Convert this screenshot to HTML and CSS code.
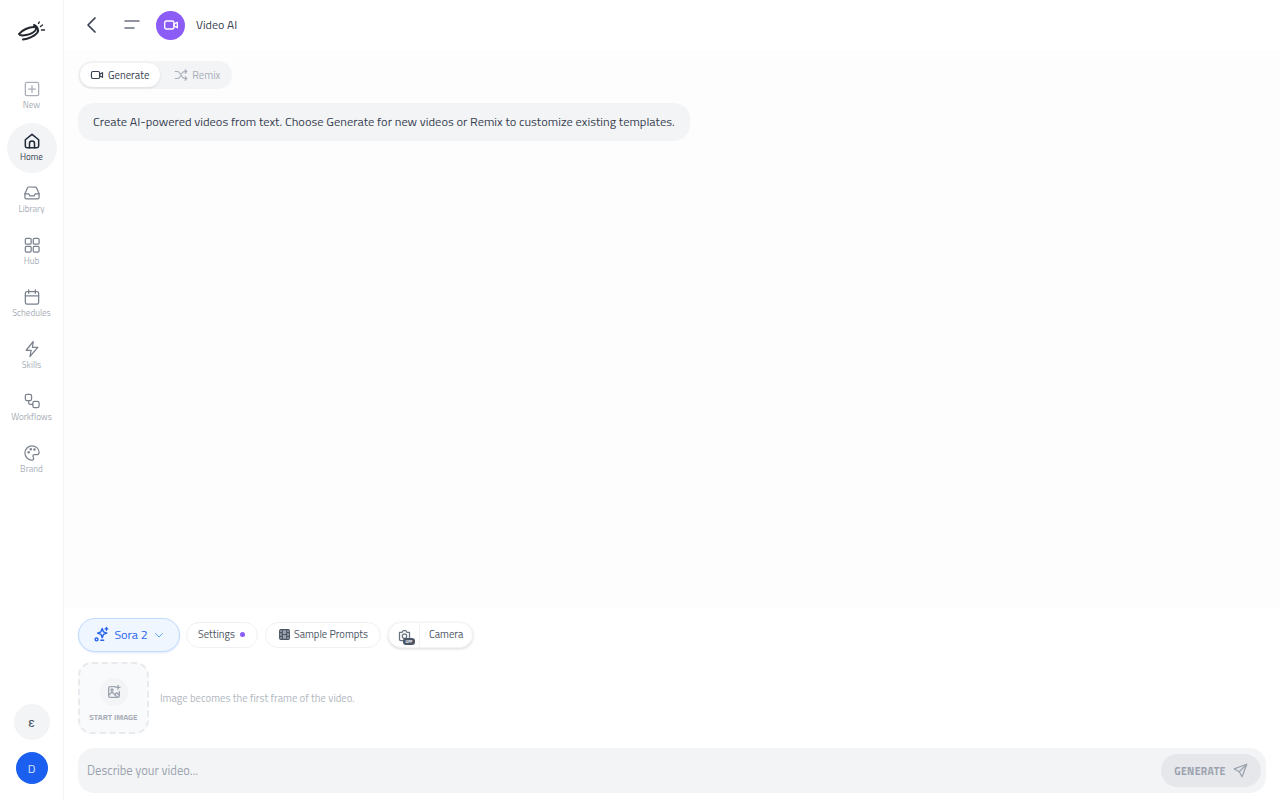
FILE: index.html
```html
<!DOCTYPE html>
<html lang="en">
<head>
<meta charset="utf-8">
<title>Video AI</title>
<link rel="stylesheet" href="styles.css">
</head>
<body>
<div class="app">
  <aside class="sidebar">
    <div class="logo">
      <svg width="28" height="22" viewBox="0 0 28 22"><path d="M1 13C4 9 11 6 16 6c3 0 3 3-1 5.500-4 2.500-10 3.500-13 2.500" stroke-width="2"/><path d="M5 18.500c5-.5 12-3.500 14.500-7 1.500-2.500 0-6-3.500-7.500" stroke-width="2"/><path d="M22.500 5.500l2-1.500M23.500 9h3M20.500 2.500l.8-1.500" stroke-width="1.400"/></svg>
    </div>
    <nav class="nav">
      <a class="nav-item">
        <svg class="nav-icon" viewBox="0 0 24 24"><rect x="4" y="4" width="16" height="16" rx="2"/><path d="M12 8v8M8 12h8"/></svg>
        <span>New</span>
      </a>
      <a class="nav-item active">
        <svg class="nav-icon" viewBox="0 0 24 24"><path d="M4 10.500 12 4l8 6.500V18a2 2 0 0 1-2 2H6a2 2 0 0 1-2-2z"/><path d="M9 20v-5a3 3 0 0 1 6 0v5"/></svg>
        <span>Home</span>
      </a>
      <a class="nav-item">
        <svg class="nav-icon" viewBox="0 0 24 24"><path d="M3.500 13 6.500 6a2 2 0 0 1 1.800-1.200h7.400A2 2 0 0 1 17.500 6l3 7v4a2 2 0 0 1-2 2h-13a2 2 0 0 1-2-2z"/><path d="M3.500 13H8l1.500 2.500h5L16 13h4.500"/></svg>
        <span>Library</span>
      </a>
      <a class="nav-item">
        <svg class="nav-icon" viewBox="0 0 24 24"><rect x="4" y="4" width="7" height="7" rx="1.500"/><rect x="13.500" y="4" width="7" height="7" rx="1.500"/><rect x="4" y="13.500" width="7" height="7" rx="1.500"/><rect x="13.500" y="13.500" width="7" height="7" rx="1.500"/></svg>
        <span>Hub</span>
      </a>
      <a class="nav-item">
        <svg class="nav-icon" viewBox="0 0 24 24"><rect x="4" y="5.500" width="16" height="15" rx="2"/><path d="M4 10.500h16M8 3.500v4M16 3.500v4"/></svg>
        <span>Schedules</span>
      </a>
      <a class="nav-item">
        <svg class="nav-icon" viewBox="0 0 24 24"><path d="M13.500 3 5 13.500h6L9.500 21 19 10h-6.500z"/></svg>
        <span>Skills</span>
      </a>
      <a class="nav-item">
        <svg class="nav-icon" viewBox="0 0 24 24"><rect x="4" y="4" width="7.500" height="7.500" rx="2"/><rect x="13" y="12.500" width="7.500" height="7.500" rx="2"/><path d="M8 11.500V14a2 2 0 0 0 2 2h3"/></svg>
        <span>Workflows</span>
      </a>
      <a class="nav-item">
        <svg class="nav-icon" viewBox="0 0 24 24"><path d="M12 3.500a8.500 8.500 0 1 0 0 17c1.500 0 2-1 2-2 0-1.500-1-1.800-1-3 0-1 .8-1.500 2-1.500h2.500c1.800 0 3-1.300 3-3C20.500 6.500 16.500 3.500 12 3.500z"/><circle cx="8" cy="11" r=".8"/><circle cx="10.500" cy="7.500" r=".8"/><circle cx="15" cy="7.800" r=".8"/></svg>
        <span>Brand</span>
      </a>
    </nav>
    <div class="side-bottom">
      <div class="round-lang">&#949;</div>
      <div class="avatar">D</div>
    </div>
  </aside>

  <main class="main">
    <header class="topbar">
      <svg class="back" width="24" height="24" viewBox="0 0 24 24"><path d="M15 5l-7 7 7 7"/></svg>
      <svg class="menu" width="18" height="12" viewBox="0 0 18 12"><path d="M2 2h14M2 9h9"/></svg>
      <div class="app-badge">
        <svg width="16" height="16" viewBox="0 0 24 24"><rect x="2.500" y="6" width="14" height="12" rx="3"/><path d="M16.500 10.500 21.500 8v8l-5-2.500z"/></svg>
      </div>
      <span class="app-title">Video AI</span>
    </header>

    <section class="content">
      <div class="tabs">
        <button class="tab selected">
          <svg width="14" height="14" viewBox="0 0 24 24"><rect x="2.500" y="6" width="14" height="12" rx="2.500"/><path d="M16.500 10.500 21.500 8v8l-5-2.500z"/></svg>
          Generate
        </button>
        <button class="tab remix">
          <svg width="14" height="14" viewBox="0 0 24 24"><path d="M2 6h4c5 0 7 12 12 12h4M2 18h4c2 0 3.500-1.500 4.500-3.500M13.500 9.500C14.500 7.500 16 6 18 6h4M19 3l3 3-3 3M19 15l3 3-3 3"/></svg>
          Remix
        </button>
      </div>
      <p class="intro">Create AI-powered videos from text. Choose Generate for new videos or Remix to customize existing templates.</p>
    </section>

    <section class="composer">
      <div class="chips">
        <button class="chip model">
          <svg width="17" height="17" viewBox="0 0 24 24"><path d="M13 3.500l1.800 4.700 4.700 1.800-4.700 1.800L13 16.500l-1.800-4.700L6.500 10l4.700-1.800z"/><circle cx="5" cy="19" r="2"/><path d="M19 2v4M17 4h4M11 20h4"/></svg>
          Sora 2
          <svg class="caret" width="12" height="12" viewBox="0 0 24 24"><path d="M5 9l7 7 7-7"/></svg>
        </button>
        <button class="chip settings">Settings <i class="dot"></i></button>
        <button class="chip prompts">
          <svg width="13" height="13" viewBox="0 0 24 24" class="film"><rect x="3" y="3" width="18" height="18" rx="2"/><path d="M8 3v18M16 3v18M3 8.500h5M3 15.500h5M16 8.500h5M16 15.500h5M8 12h8"/></svg>
          Sample Prompts
        </button>
        <div class="camera">
          <span class="cam-icon">
            <svg width="15" height="15" viewBox="0 0 24 24"><path d="M4 7h4l2-3h4l2 3h4v11a2 2 0 0 1-2 2H6a2 2 0 0 1-2-2z"/><circle cx="12" cy="13" r="3.500"/></svg>
            <b class="off">OFF</b>
          </span>
          <span class="cam-label">Camera</span>
        </div>
      </div>
      <div class="start-row">
        <div class="start-image">
          <span class="img-circle">
            <svg width="16" height="16" viewBox="0 0 24 24"><path d="M14 4H6a2 2 0 0 0-2 2v12a2 2 0 0 0 2 2h12a2 2 0 0 0 2-2v-7"/><circle cx="9" cy="9" r="1.500"/><path d="M4 17l5-5 8 8M14 15l2-2 4 4M18 2v6M15 5h6"/></svg>
          </span>
          <span class="start-label">START IMAGE</span>
        </div>
        <span class="hint">Image becomes the first frame of the video.</span>
      </div>
      <div class="prompt">
        <span class="placeholder">Describe your video...</span>
        <button class="generate">
          GENERATE
          <svg width="15" height="15" viewBox="0 0 24 24"><path d="M22 2 2 9.500l8 4.500 4.500 8zM22 2 10 14"/></svg>
        </button>
      </div>
    </section>
  </main>
</div>
</body>
</html>
```
FILE: styles.css
```css
* { box-sizing: border-box; }
html, body { margin: 0; height: 100%; }
body { font-family: "Titillium Web", "Inter", "Noto Sans", sans-serif; color: #374151; background: #fff; overflow: hidden; }
svg { fill: none; stroke: currentColor; stroke-width: 2; stroke-linecap: round; stroke-linejoin: round; flex: none; }
button { font: inherit; border: 0; background: none; padding: 0; color: inherit; }

.app { display: flex; width: 1280px; height: 800px; }

.sidebar { width: 64px; flex: none; display: flex; flex-direction: column; align-items: center; border-right: 1px solid #f3f4f6; background: #fff; }
.logo { height: 71px; width: 100%; padding: 21px 0 0; display: flex; align-items: flex-start; justify-content: center; color: #22262d; }
.nav { display: flex; flex-direction: column; gap: 2px; align-items: center; }
.nav-item { width: 50px; height: 50px; padding-bottom: 4px; border-radius: 50%; display: flex; flex-direction: column; align-items: center; justify-content: center; color: #a8aeb8; font-size: 9px; line-height: 11px; }
.nav-icon { width: 20px; height: 20px; color: #7b828e; stroke-width: 1.500; }
.nav-item:first-child .nav-icon { color: #a8aeb8; }
.nav-item.active { background: #f3f4f6; color: #374151; font-weight: 500; }
.nav-item.active .nav-icon { color: #1f2937; stroke-width: 1.800; }
.side-bottom { margin-top: auto; display: flex; flex-direction: column; align-items: center; gap: 12px; padding-bottom: 16px; }
.round-lang { width: 36px; height: 36px; border-radius: 50%; background: #f3f4f6; display: flex; align-items: center; justify-content: center; font-size: 12px; font-weight: 500; color: #4b5563; }
.avatar { width: 32px; height: 32px; border-radius: 50%; background: #1a5ff0; color: #dbe7ff; display: flex; align-items: center; justify-content: center; font-size: 12px; }

.main { flex: 1; min-width: 0; display: flex; flex-direction: column; background: #fff; }
.topbar { height: 50px; flex: none; display: flex; align-items: center; padding-left: 16px; color: #1f2937; }
.back { stroke-width: 1.700; color: #374151; }
.menu { margin-left: 19px; color: #6b7280; stroke-width: 1.500; }
.app-badge { width: 29px; height: 29px; margin-left: 15px; border-radius: 50%; background: #8b5cf6; color: #fff; display: flex; align-items: center; justify-content: center; }
.app-title { margin-left: 11px; padding-bottom: 1px; font-size: 12px; font-weight: 500; color: #374151; }

.content { flex: 1; padding: 11px 14px 0; background: #fdfdfe; }
.tabs { display: inline-flex; height: 28px; padding: 2px; border-radius: 14px; background: #f3f4f6; width: 154px; }
.tab { display: flex; align-items: center; gap: 4px; height: 23px; padding: 0 11px; border-radius: 12px; font-size: 10.700px; color: #a8aeb8; }
.tab.selected { width: 81px; height: 24px; padding-left: 10px; background: #fff; color: #374151; box-shadow: 0 1px 3px rgba(0,0,0,.1); }
.tab.remix { padding-left: 14px; gap: 4px; }
.intro { margin: 14px 0 0; width: 612px; height: 38px; padding: 0 0 2px 15px; display: flex; align-items: center; border-radius: 16px; background: #f3f4f6; font-size: 12.450px; color: #374151; white-space: nowrap; }

.composer { flex: none; padding: 11px 14px 7px; background: #fff; }
.chips { display: flex; align-items: center; gap: 7px; }
.chip { height: 26px; padding: 0 11px 2px 12px; display: flex; align-items: center; gap: 5px; border-radius: 13px; border: 1px solid #f0f1f4; background: #fff; font-size: 10.600px; color: #4b5563; }
.chip.settings { padding: 0 12px 2px 11px; margin-left: -1px; gap: 2px; }
.chip.prompts { gap: 3px; padding-right: 12px; }
.dot { width: 5px; height: 5px; margin-left: 3px; border-radius: 50%; background: #8b5cf6; }
.film { stroke: #4b5563; fill: #9ca3af; }
.chip.model { height: 34px; width: 102px; gap: 4px; padding: 0 0 1px; border-radius: 17px; border: 1px solid #bfdbfe; background: #eff6ff; color: #2563eb; font-size: 12.300px; justify-content: center; box-shadow: 0 1px 2px rgba(37,99,235,.15); }
.caret { color: #60a5fa; margin-left: 1px; }
.camera { height: 26px; display: flex; align-items: center; border-radius: 13px; background: #fff; border: 1px solid #f3f4f6; box-shadow: 0 1px 3px rgba(0,0,0,.15); font-size: 10.600px; color: #4b5563; }
.cam-icon { position: relative; width: 31px; height: 100%; display: flex; align-items: center; justify-content: center; border-right: 1px solid #f3f4f6; color: #6b7280; }
.off { position: absolute; left: 14px; top: 15px; width: 12px; height: 7px; border-radius: 3px; background: #4b5563; color: #fff; font-size: 4px; line-height: 7px; text-align: center; font-weight: 700; }
.cam-label { padding: 0 9px 2px; }

.start-row { display: flex; align-items: center; gap: 11px; margin-top: 10px; }
.start-image { width: 71px; height: 72px; border-radius: 14px; border: 2px dashed #e8eaee; background: #f9fafb; display: flex; flex-direction: column; align-items: center; padding-top: 14px; gap: 5px; }
.img-circle { width: 28px; height: 28px; border-radius: 50%; background: #f3f4f6; color: #9ca3af; display: flex; align-items: center; justify-content: center; }
.start-label { font-size: 8.200px; font-weight: 700; color: #a8aeb8; white-space: nowrap; }
.hint { font-size: 10.650px; color: #b0b6c0; }

.prompt { margin-top: 14px; height: 45px; border-radius: 16px; background: #f3f4f6; display: flex; align-items: center; justify-content: space-between; padding: 0 5px 0 9px; }
.placeholder { font-size: 12.500px; color: #9ca3af; }
.generate { width: 100px; height: 33px; border-radius: 17px; background: #e5e7eb; color: #9ca3af; display: flex; align-items: center; justify-content: center; gap: 7px; font-size: 10.500px; font-weight: 700; letter-spacing: .3px; }
```
